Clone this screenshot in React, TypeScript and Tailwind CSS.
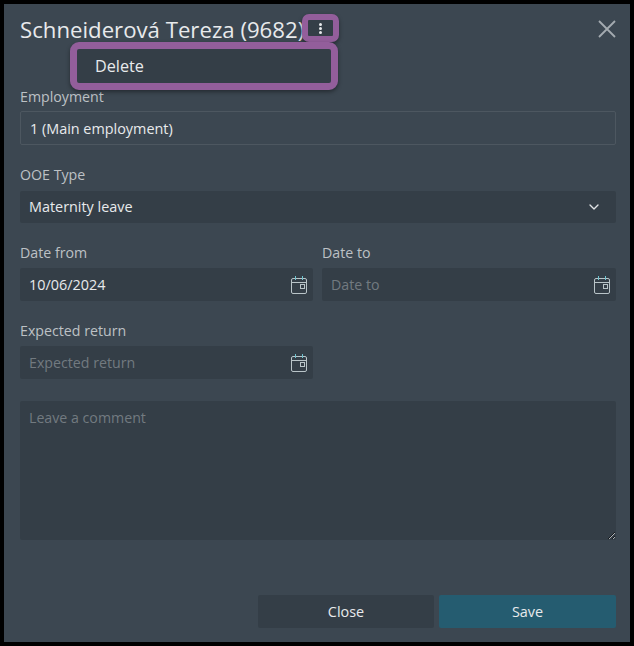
import React from "react";
import { ChevronDown } from "lucide-react";

const CalendarIcon = () => (
  <svg width="16" height="18" viewBox="0 0 16 18" fill="none" className="shrink-0">
    <rect x="0.5" y="2.5" width="15" height="15" rx="1.5" stroke="#b9c4c8" />
    <path d="M1 6.5H15" stroke="#b9c4c8" />
    <path d="M4.5 0V4M11.5 0V4" stroke="#6fc3cf" />
    <rect x="9.5" y="8.5" width="4" height="4" stroke="#b9c4c8" />
  </svg>
);

const Label = ({ children, className }: { children: React.ReactNode; className: string }) => (
  <label className={`block text-[14.2px] text-[#bcc1c5] ${className}`}>{children}</label>
);

const DateField = ({ value, placeholder }: { value?: string; placeholder: string }) => (
  <div className="flex h-[33px] items-center justify-between rounded-[2px] bg-[#343e47] pl-[9px] pr-[6px]">
    {value ? (
      <span className="text-[14.4px] text-[#e8eaec]">{value}</span>
    ) : (
      <span className="text-[14.2px] text-[#727a80]">{placeholder}</span>
    )}
    <CalendarIcon />
  </div>
);

const App = () => {
  return (
    <div className="h-[646px] w-[634px] bg-black p-[4px] font-['Open_Sans','Noto_Sans',sans-serif]">
      <div className="relative flex h-[638px] w-[626px] flex-col bg-[#3c4751] pl-[16px] pr-[14px] pt-[8px]">
        <div className="flex h-[34px] items-center justify-between">
          <h1 className="text-[22.2px] leading-[33px] text-[#e8eaec]">Schneiderová Tereza (9682)</h1>
          <svg width="20" height="20" viewBox="0 0 20 20" fill="none" stroke="#a4abb0" strokeWidth="1.8" className="mr-[-1px]">
            <path d="M2 2L18 18M18 2L2 18" />
          </svg>
        </div>

        {/* kebab button with highlight */}
        <div className="absolute left-[298px] top-[10px] flex h-[28px] w-[37px] items-center justify-center rounded-[7px] border-[6px] border-[#935e9b] bg-[#343e47] shadow-[0_2px_4px_rgba(0,0,0,0.4)]">
          <div className="flex flex-col gap-[1px]">
            <span className="h-[3px] w-[3px] rounded-full bg-[#e8eaec]" />
            <span className="h-[3px] w-[3px] rounded-full bg-[#e8eaec]" />
            <span className="h-[3px] w-[3px] rounded-full bg-[#e8eaec]" />
          </div>
        </div>

        {/* dropdown menu with highlight */}
        <div className="absolute left-[66px] top-[38px] flex h-[48px] w-[268px] items-center rounded-[9px] border-[7px] border-[#935e9b] bg-[#343e47] pl-[18px] text-[16.2px] text-[#e8eaec] shadow-[0_2px_4px_rgba(0,0,0,0.4)]">
          Delete
        </div>

        <div className="mt-[41px]">
          <Label className="h-[24px] leading-[20px]">Employment</Label>
          <div className="flex h-[34px] items-center rounded-[2px] border border-[#4d5760] pl-[9px] pt-[1px] text-[14.4px] text-[#e8eaec]">
            1 (Main employment)
          </div>
        </div>

        <div className="mt-[19px]">
          <Label className="h-[27px] leading-[22px]">OOE Type</Label>
          <div className="flex h-[32px] items-center justify-between rounded-[2px] bg-[#343e47] pl-[9px] pr-[14px] text-[14.4px] text-[#e8eaec]">
            Maternity leave
            <ChevronDown size={16} strokeWidth={2} color="#e0e3e5" />
          </div>
        </div>

        <div className="mt-[19px] grid grid-cols-[293px_1fr] gap-x-[9px]">
          <div>
            <Label className="h-[26px] leading-[22px]">Date from</Label>
            <DateField value="10/06/2024" placeholder="Date from" />
          </div>
          <div>
            <Label className="h-[26px] leading-[22px]">Date to</Label>
            <DateField placeholder="Date to" />
          </div>
        </div>

        <div className="mt-[19px] grid grid-cols-[293px_1fr] gap-x-[9px]">
          <div>
            <Label className="h-[26px] leading-[22px]">Expected return</Label>
            <DateField placeholder="Expected return" />
          </div>
        </div>

        <textarea
          placeholder="Leave a comment"
          className="mt-[22px] h-[139px] w-full rounded-[2px] bg-[#343e47] px-[9px] py-[6px] text-[14.2px] text-[#e8eaec] outline-none placeholder:text-[#727a80]"
        />

        <div className="mt-[55px] flex justify-end gap-[5px]">
          <button className="h-[33px] w-[176px] rounded-[2px] bg-[#343e47] text-[14.4px] text-[#e8eaec]">Close</button>
          <button className="h-[33px] w-[177px] rounded-[2px] bg-[#255c70] text-[14.4px] text-[#e8eaec]">Save</button>
        </div>
      </div>
    </div>
  );
};

export default App;
